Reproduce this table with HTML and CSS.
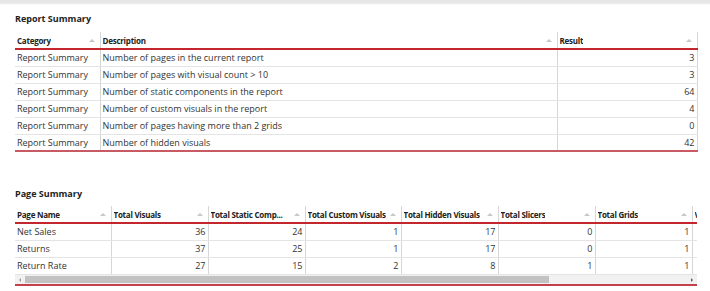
FILE: index.html
```html
<!DOCTYPE html>
<html lang="en">
<head>
  <meta charset="UTF-8">
  <title>Report Analyzer</title>
  <link rel="stylesheet" href="styles.css">
</head>
<body>
  <div class="top-bar"></div>

  <section class="block">
    <h2>Report Summary</h2>
    <div class="grid-wrap">
      <table class="grid summary">
        <colgroup><col style="width:85px"><col style="width:457px"><col style="width:140px"></colgroup>
        <thead>
          <tr>
            <th><div class="head"><span>Category</span><i class="sort"></i></div></th>
            <th><div class="head"><span>Description</span><i class="sort"></i></div></th>
            <th><div class="head"><span>Result</span><i class="sort"></i></div></th>
          </tr>
        </thead>
        <tbody>
          <tr><td>Report Summary</td><td>Number of pages in the current report</td><td class="num">3</td></tr>
          <tr><td>Report Summary</td><td>Number of pages with visual count &gt; 10</td><td class="num">3</td></tr>
          <tr><td>Report Summary</td><td>Number of static components in the report</td><td class="num">64</td></tr>
          <tr><td>Report Summary</td><td>Number of custom visuals in the report</td><td class="num">4</td></tr>
          <tr><td>Report Summary</td><td>Number of pages having more than 2 grids</td><td class="num">0</td></tr>
          <tr><td>Report Summary</td><td>Number of hidden visuals</td><td class="num">42</td></tr>
        </tbody>
      </table>
    </div>
  </section>

  <section class="block pages">
    <h2>Page Summary</h2>
    <div class="grid-wrap scroll">
      <div class="viewport">
        <table class="grid wide">
          <colgroup>
            <col style="width:96px"><col style="width:97px"><col style="width:97px"><col style="width:96px">
            <col style="width:97px"><col style="width:97px"><col style="width:97px"><col style="width:97px">
          </colgroup>
          <thead>
            <tr>
              <th><div class="head"><span>Page Name</span><i class="sort"></i></div></th>
              <th><div class="head"><span>Total Visuals</span><i class="sort"></i></div></th>
              <th><div class="head"><span>Total Static Comp...</span><i class="sort"></i></div></th>
              <th><div class="head"><span>Total Custom Visuals</span><i class="sort"></i></div></th>
              <th><div class="head"><span>Total Hidden Visuals</span><i class="sort"></i></div></th>
              <th><div class="head"><span>Total Slicers</span><i class="sort"></i></div></th>
              <th><div class="head"><span>Total Grids</span><i class="sort"></i></div></th>
              <th><div class="head"><span>Visual Count</span><i class="sort"></i></div></th>
            </tr>
          </thead>
          <tbody>
            <tr><td>Net Sales</td><td class="num">36</td><td class="num">24</td><td class="num">1</td><td class="num">17</td><td class="num">0</td><td class="num">1</td><td class="num"></td></tr>
            <tr><td>Returns</td><td class="num">37</td><td class="num">25</td><td class="num">1</td><td class="num">17</td><td class="num">0</td><td class="num">1</td><td class="num"></td></tr>
            <tr><td>Return Rate</td><td class="num">27</td><td class="num">15</td><td class="num">2</td><td class="num">8</td><td class="num">1</td><td class="num">1</td><td class="num"></td></tr>
          </tbody>
        </table>
      </div>
      <div class="hscroll">
        <span class="arrow left"></span>
        <span class="track"><span class="thumb"></span></span>
        <span class="arrow right"></span>
      </div>
    </div>
  </section>
</body>
</html>
```

FILE: styles.css
```css
* { box-sizing: border-box; margin: 0; padding: 0; }

body {
  font-family: "Open Sans", "Noto Sans", sans-serif;
  font-size: 9px;
  color: #333;
  background: #fff;
  width: 710px;
  height: 291px;
  overflow: hidden;
}

.top-bar {
  height: 5px;
  background: linear-gradient(#e6e6e6 0, #e6e6e6 3px, #fff 5px);
}

.block { padding: 0 13px 0 15px; }

h2 {
  font-size: 9px;
  font-weight: 700;
  color: #222;
  height: 27px;
  line-height: 14px;
  padding-top: 7px;
}

.pages { margin-top: 28px; }
.pages h2 { padding-top: 7px; height: 26px; }

.grid-wrap { width: 682px; }

.grid {
  border-collapse: collapse;
  table-layout: fixed;
}

.summary { width: 682px; }
.wide { width: 774px; }

.grid th {
  height: 17px;
  padding: 0 2px;
  text-align: left;
  font-size: 8px;
  font-weight: 700;
  letter-spacing: -0.25px;
  color: #222;
  border-right: 1px solid #d6d6d6;
  border-bottom: 2px solid #c4262e;
  white-space: nowrap;
  overflow: hidden;
  vertical-align: middle;
}

.head {
  display: flex;
  align-items: center;
  justify-content: space-between;
  gap: 2px;
  overflow: hidden;
}

.head span { overflow: hidden; }

.sort {
  flex: none;
  width: 0;
  height: 0;
  border-left: 3px solid transparent;
  border-right: 3px solid transparent;
  border-bottom: 3px solid #c8c8c8;
  margin-right: 3px;
}

.grid td {
  height: 17px;
  padding: 0 2px;
  border-right: 1px solid #d6d6d6;
  border-bottom: 1px solid #e4e4e4;
  white-space: nowrap;
  overflow: hidden;
  color: #333;
}

.grid td.num { text-align: right; }

.summary tbody tr:last-child td { border-bottom: 2px solid #c85a63; }

.viewport {
  width: 682px;
  overflow: hidden;
}

.hscroll {
  display: flex;
  height: 11px;
  background: #f1f1f1;
  border-bottom: 2px solid #c4414b;
}

.arrow {
  width: 10px;
  position: relative;
}
.arrow::after {
  content: "";
  position: absolute;
  top: 3px;
  left: 4px;
  border-top: 2px solid transparent;
  border-bottom: 2px solid transparent;
}
.arrow.left::after { border-right: 2px solid #a0a0a0; }
.arrow.right::after { border-left: 2px solid #606060; }

.track { flex: 1; padding: 1px 0; }
.thumb {
  display: block;
  width: 524px;
  height: 100%;
  background: #c2c2c2;
}
```
